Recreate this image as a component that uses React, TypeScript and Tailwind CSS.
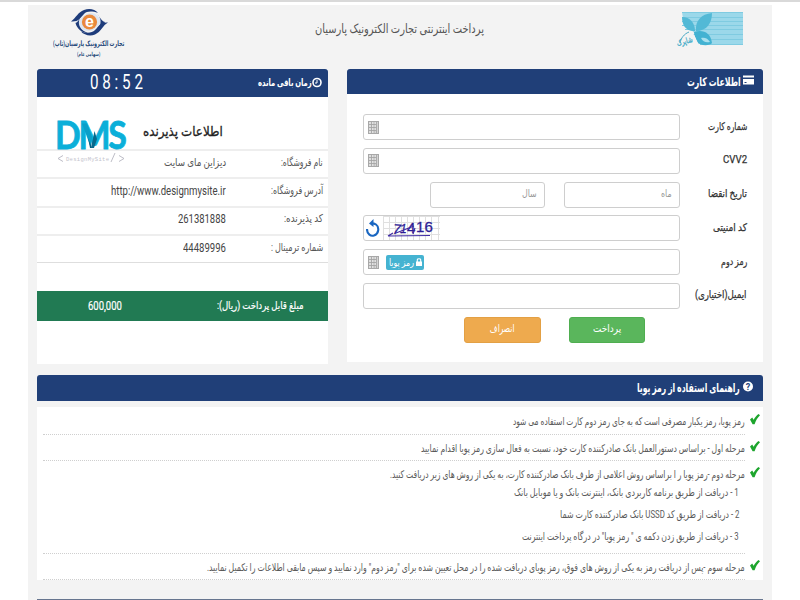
import React, { useLayoutEffect, useRef, useState } from "react";

type FitProps = { w: number; children: React.ReactNode; className?: string; ltr?: boolean };

// Single line of text condensed or widened to a given width.
function Fit({ w, children, className = "", ltr = false }: FitProps) {
  const ref = useRef<HTMLSpanElement>(null);
  const [scale, setScale] = useState(1);
  useLayoutEffect(() => {
    if (ref.current) setScale(w / ref.current.offsetWidth);
  }, [w]);
  return (
    <span className={"flex shrink-0 justify-start " + className} style={{ width: w }} dir={ltr ? "ltr" : "rtl"}>
      <span
        ref={ref}
        className={"inline-block shrink-0 whitespace-nowrap " + (ltr ? "origin-left" : "origin-right")}
        style={{ transform: `scaleX(${scale})` }}
      >
        {children}
      </span>
    </span>
  );
}

function Keypad() {
  return (
    <svg width="11" height="13" viewBox="0 0 11 13" className="shrink-0">
      <rect x="0.5" y="0.5" width="10" height="12" fill="#d4d4d4" stroke="#a8a8a8" />
      <path d="M1 3.500H8M1 6.500H8M1 9.500H8M3.500 1V12M6 1V12M8.500 1V12" stroke="#a2a2a2" strokeWidth="0.8" />
      <path d="M1.300 2H2.800M4 2H5.500M6.500 2H7.800M1.300 5H2.800M4 5H5.500M6.500 5H7.800M1.300 8H2.800M4 8H5.500M6.500 8H7.800M1.300 11H2.800M4 11H5.500" stroke="#f0f0f0" />
    </svg>
  );
}

function EyeLogo() {
  return (
    <svg width="37" height="27" viewBox="0 0 37 27">
      <path d="M0 12.5C5 9 7 3 13 1C18-1 24 0 27 4C21 2 16 2 13 5C9 9 8 13 0 12.5Z" fill="#1e3c7b" />
      <path d="M37 13.5C32 16 30 23 24 25.500C19 27.500 13 26 10 22.500C16 24.500 21 24 24 21C28 17 29 13 37 13.500Z" fill="#1e3c7b" />
      <path d="M4 13C10 12 12 4 20 4C26 4 28 9 32 13C27 14 25 22 18 22C11 22 8 17 4 13Z" fill="#dce5f1" />
      <path d="M13 4C4 12 8 21 17 24C11 24 6 20 4.500 14C8 13 9 7 13 4ZM24.500 3C34 12 29 20 20 24.500C27 24 31 19 34 13C30 12 28 6 24.500 3Z" fill="#1e3c7b" />
      <circle cx="18.500" cy="13" r="7.600" fill="#e9893c" />
      <text x="18.500" y="18" textAnchor="middle" fontSize="16" fontWeight="700" fontFamily="Liberation Sans" fill="#fff">e</text>
    </svg>
  );
}

function ShaparakLogo() {
  return (
    <svg width="67" height="39" viewBox="0 0 67 39" className="overflow-visible">
      <path d="M6 0H67V33H29L22 24L15 18L8 14Z" fill="#9bd8ea" />
      <path d="M6 .5H67M6 5.500H67M6 9.500H67M6 13.500H67M9 17.500H67M16 22.500H67M20 27.500H67M24 32.500H67" stroke="#7fcbe1" strokeWidth="1" />
      <path d="M6 5C14 5 19 11 19 19C11 20 6 14 6 5Z" fill="#52b9d6" />
      <path d="M20 19C19 9 25 2 36 1C36 11 31 19 20 19Z" fill="#52b9d6" />
      <path d="M18 20C26 17 35 20 36 31C34 34 24 34 21 30C20 26 18 24 18 20Z" fill="#43b2d2" />
      <path d="M25 26C28 25 32 26 34 30C30 31 27 30 25 26Z" fill="#a9e0ee" />
      <path d="M10 19L16 19L22 31L21 33L5 33L4 26Z" fill="#f3f3f3" />
      <path d="M13 20C8 22 5 26 4 31" stroke="#48a9c5" strokeWidth="1" fill="none" />
      <text x="9" y="32" textAnchor="middle" fontSize="8" fontFamily="DejaVu Sans" fill="#3eabc9" stroke="#3eabc9" strokeWidth="0.3" transform="rotate(-15 9 31) translate(9 32) scale(.7 1) translate(-9 -32)">شاپرک</text>
    </svg>
  );
}

function DmsLogo() {
  return (
    <svg width="69" height="46" viewBox="0 0 69 46" className="overflow-visible">
      <text transform="translate(-2 30) scale(.88 1)" fontFamily="Lato" fontWeight="700" fontSize="38.500" letterSpacing="-2.600" fill="#0bafd9" stroke="#0bafd9" strokeWidth="0.8">DMS</text>
      <path d="M25 4.500L30 4.500L35 18L34 29Z" fill="#0a9fc8" />
      <path d="M31 19L35 29L33 29Z" fill="#075f80" />
      <path d="M34 29L37.500 12L40 20L37 29Z" fill="#08698c" />
      <path d="M6 36.500L1 39.500L6 42.500M62 36.500L67 39.500L62 42.500M58 34L54 43" stroke="#b5b5c0" strokeWidth="0.9" fill="none" />
      <text x="9" y="41.500" fontSize="5.500" fontFamily="Liberation Mono" textLength="43" fill="#c3c3cc">DesignMySite</text>
    </svg>
  );
}

function Check() {
  return (
    <svg width="10" height="11" viewBox="0 0 10 11" className="shrink-0">
      <path d="M0 5.500L2.200 3.600L3.600 5.800C5 3.200 6.700 1.300 8.600 0L10 1.300C7.500 3.700 5.700 6.700 4.600 10.300H2.600Z" fill="#1da52d" />
    </svg>
  );
}

function Captcha() {
  return (
    <svg width="57" height="24" viewBox="0 0 57 24" className="shrink-0">
      <path d="M0 .5H57M0 6.500H57M0 12.500H57M0 18.500H57M.5 0V25M6.500 0V25M12.500 0V25M18.500 0V25M24.500 0V25M30.500 0V25M36.500 0V25M42.500 0V25M48.500 0V25M55.500 0V25" stroke="#e0e0e0" />
      <g fontFamily="Liberation Sans" fill="#2c1c94" stroke="#2c1c94" strokeWidth="0.3" fontSize="15">
        <text x="10" y="18" fontStyle="italic" fontSize="14" transform="rotate(5 14 13)">7</text>
        <text x="17" y="17" fontStyle="italic" fontSize="12">1</text>
        <text x="24" y="17">4</text>
        <text x="33" y="16">1</text>
        <text x="41.500" y="15.500">6</text>
      </g>
      <path d="M5 20L47 19.500M5 20L10 17M13 17L31 10M30 18L32 12" stroke="#3f2ba3" strokeWidth="1.200" fill="none" />
    </svg>
  );
}

function Field({ label, lw, children }: { label: string; lw: number; children?: React.ReactNode }) {
  return (
    <div className="flex h-[26px] items-center justify-between">
      {children}
      <Fit w={lw} className="pb-[1px] text-[10.500px] leading-[20px] text-[#333] [-webkit-text-stroke:0.25px_#333]">{label}</Fit>
    </div>
  );
}

const box = "flex h-[26px] items-center rounded-[3px] border border-[#cecece] bg-white ";

function Row({ label, lw, value, vw, ltr }: { label: string; lw: number; value: string; vw: number; ltr?: boolean }) {
  return (
    <div className="flex h-[28.300px] items-center justify-end border-t-2 border-[#eeeeee] pb-[3px] pr-[5px] text-[11px] leading-[20px] text-[#555]">
      <Fit w={vw} ltr={ltr} className={ltr ? "text-[12px] text-[#444]" : ""}>{value}</Fit>
      <div className="flex w-[97px] justify-end"><Fit w={lw}>{label}</Fit></div>
    </div>
  );
}

function Step({ text, w, children, h }: { text: string; w: number; children?: React.ReactNode; h: string }) {
  return (
    <li className={"flex items-start justify-end gap-[5px] " + h}>
      <div className="flex h-full flex-1 flex-col items-end border-b border-dotted border-[#cfcfcf] pt-[5px]">
        <Fit w={w} className="leading-[18px]">{text}</Fit>
        {children}
      </div>
      <div className="pt-[6px]"><Check /></div>
    </li>
  );
}

export default function App() {
  return (
    <div className="h-[600px] w-[800px] overflow-hidden bg-white font-[Roboto,'DejaVu_Sans',sans-serif]">
      <div className="h-[5px] border-t-2 border-[#d9d9d9] bg-white" />
      <main className="mx-auto flex h-[595px] w-[744px] flex-col bg-[#f3f3f3] px-[9px]">
        <header className="flex h-[64px] shrink-0 items-start justify-between">
          <div className="flex w-[88px] flex-col items-center pl-[16px] pt-[4px] text-[#294b7b]">
            <EyeLogo />
            <Fit w={71} className="mt-[2px] text-[7.500px] font-bold leading-[12px]">تجارت الکترونیک پارسیان(تاپ)</Fit>
            <Fit w={23} className="text-[5.500px] font-bold leading-[9px]">(سهامی عام)</Fit>
          </div>
          <h1 className="pr-[2px] pt-[14px]">
            <Fit w={169} className="text-[12.500px] leading-[20px] text-[#555]">پرداخت اینترنتی تجارت الکترونیک پارسیان</Fit>
          </h1>
          <div className="w-[88px] pl-[1px] pt-[7px]"><ShaparakLogo /></div>
        </header>

        <div className="flex h-[306px] shrink-0 items-start justify-between">
          <section className="h-[295px] w-[291px] bg-white">
            <div className="flex h-[28px] items-center justify-between rounded-t-[3px] bg-[#203f78] pl-[53px] pr-[6px] text-white">
              <Fit ltr w={53} className="text-[19.500px] leading-[28px]">0 8 : 5 2</Fit>
              <div className="flex items-center">
                <Fit w={54} className="text-[10px] font-bold leading-[20px]">زمان باقی مانده</Fit>
                <svg width="10" height="12" viewBox="0 0 10 12"><circle cx="5" cy="5.500" r="4" fill="none" stroke="#fff" strokeWidth="1.600" /><path d="M5 3V6H3" stroke="#fff" fill="none" /></svg>
              </div>
            </div>
            <div className="relative flex h-[52px] items-center justify-end pr-[105px] pt-[15px]">
              <Fit w={80} className="text-[13.500px] leading-[24px] text-[#222] [-webkit-text-stroke:0.3px_#222]">اطلاعات پذیرنده</Fit>
              <div className="absolute left-[20px] top-[22px]"><DmsLogo /></div>
            </div>
            <Row label="نام فروشگاه:" lw={42} value="دیزاین مای سایت" vw={62} />
            <Row label="آدرس فروشگاه:" lw={52} value="http://www.designmysite.ir" vw={115} ltr />
            <Row label="کد پذیرنده:" lw={39} value="261381888" vw={48} ltr />
            <Row label="شماره ترمینال :" lw={52} value="44489996" vw={43} ltr />
            <div className="h-[29px] border-t border-[#dedede]" />
            <div className="flex h-[30px] items-center justify-between bg-[#217a53] pb-[1px] pl-[51px] pr-[24px] text-white">
              <Fit ltr w={34} className="text-[12px] leading-[20px] [-webkit-text-stroke:0.2px_#fff]">600,000</Fit>
              <Fit w={87} className="text-[11px] leading-[20px] [-webkit-text-stroke:0.2px_#fff]">مبلغ قابل پرداخت (ریال):</Fit>
            </div>
          </section>

          <section className="h-[293px] w-[416px] bg-white">
            <div className="flex h-[25px] items-center justify-end gap-[2px] rounded-t-[3px] bg-[#203f78] pr-[9px] text-white">
              <Fit w={54} className="text-[12px] font-bold leading-[20px]">اطلاعات کارت</Fit>
              <svg width="11" height="10" viewBox="0 0 11 10" className="mb-[3px]"><path d="M0 .5H11V2.500H0ZM0 4H11V9.500H0Z" fill="#fff" /><path d="M1.500 7.500H3.500" stroke="#203f78" /></svg>
            </div>
            <div className="flex flex-col gap-[7.800px] pl-[16px] pr-[16px] pt-[20px]">
              <Field label="شماره کارت" lw={39}><div className={box + "w-[317px] pl-[4px]"}><Keypad /></div></Field>
              <Field label="CVV2" lw={24}><div className={box + "w-[317px] pl-[4px]"}><Keypad /></div></Field>
              <Field label="تاریخ انقضا" lw={39}>
                <div className="flex w-[317px] justify-end gap-[19px] text-[10px] text-[#999]">
                  <div className={box + "w-[115px] justify-end pb-[2px] pr-[7px]"}><Fit w={15}>سال</Fit></div>
                  <div className={box + "w-[116px] justify-end pb-[2px] pr-[7px]"}><Fit w={11}>ماه</Fit></div>
                </div>
              </Field>
              <Field label="کد امنیتی" lw={34}>
                <div className={box + "w-[317px] gap-[3px] pl-[2px]"}>
                  <svg width="14" height="19" viewBox="0 0 14 19"><path d="M1 10C1 15.500 5 17.500 8 16.500C13 15 13.500 8 10 5.500C8.500 4.400 7 4.400 5 4.400" fill="none" stroke="#1966c1" strokeWidth="2.100" /><path d="M3 4.500L7.500 0V8Z" fill="#1966c1" /></svg>
                  <Captcha />
                </div>
              </Field>
              <Field label="رمز دوم" lw={26}>
                <div className={box + "w-[317px] gap-[7px] pl-[4px]"}>
                  <Keypad />
                  <div className="flex h-[15px] w-[38px] items-center justify-center gap-[2px] rounded-[2px] bg-[#45b3d1] text-white">
                    <Fit w={25} className="text-[10px] leading-[15px]">رمز پویا</Fit>
                    <svg width="6" height="8" viewBox="0 0 6 8"><path d="M0 3.500H6V8H0Z" fill="#fff" /><path d="M1.300 4V2C1.300 .3 4.700 .3 4.700 2V4" fill="none" stroke="#fff" strokeWidth="1.100" /></svg>
                  </div>
                </div>
              </Field>
              <Field label="ایمیل(اختیاری)" lw={52}><div className={box + "w-[317px]"} /></Field>
              <div className="flex gap-[28px] pl-[101px] text-[10.500px] leading-[20px] text-white">
                <button className="flex h-[26px] w-[77px] items-center justify-center rounded-[3px] border border-[#e3a044] bg-[#eeaa4e] pb-[2px]"><Fit w={25}>انصراف</Fit></button>
                <button className="flex h-[26px] w-[76px] items-center justify-center rounded-[3px] border border-[#4fae50] bg-[#5ab65c] pb-[1px]"><Fit w={28}>پرداخت</Fit></button>
              </div>
            </div>
          </section>
        </div>

        <div className="flex h-[26px] shrink-0 items-center justify-end gap-[3px] rounded-t-[3px] bg-[#203f78] pr-[10px] text-white">
          <Fit w={103} className="text-[12px] font-bold leading-[20px]">راهنمای استفاده از رمز پویا</Fit>
          <svg width="10" height="12" viewBox="0 0 10 12" className="mb-[2px]"><circle cx="5" cy="5.500" r="5" fill="#fff" /><text x="5" y="9" textAnchor="middle" fontSize="9" fontWeight="700" fontFamily="Roboto" fill="#203f78">?</text></svg>
        </div>
        <ul className="mt-[6px] h-[173px] shrink-0 bg-white pl-[6px] pr-[3px] pt-[1px] text-[10.500px] text-[#5a5a5a]">
          <Step h="h-[26.500px]" w={232} text="رمز پویا، رمز یکبار مصرفی است که به جای رمز دوم کارت استفاده می شود" />
          <Step h="h-[26px]" w={324} text="مرحله اول - براساس دستورالعمل بانک صادرکننده کارت خود، نسبت به فعال سازی رمز پویا اقدام نمایید" />
          <Step h="h-[93px]" w={355} text="مرحله دوم -رمز پویا ر ا براساس روش اعلامی از طرف بانک صادرکننده کارت، به یکی از روش های زیر دریافت کنید.">
            <div className="flex flex-col items-end gap-[4px] pr-[6px] leading-[18px]">
              <Fit w={225}>1 - دریافت از طریق برنامه کاربردی بانک، اینترنت بانک و یا موبایل بانک</Fit>
              <Fit w={179}>2 - دریافت از طریق کد USSD بانک صادرکننده کارت شما</Fit>
              <Fit w={217}>3 - دریافت از طریق زدن دکمه ی " رمز پویا" در درگاه پرداخت اینترنت</Fit>
            </div>
          </Step>
          <Step h="h-[26.500px]" w={538} text={'مرحله سوم -پس از دریافت رمز به یکی از روش های فوق، رمز پویای دریافت شده را در محل تعیین شده برای "رمز دوم" وارد نمایید و سپس مابقی اطلاعات را تکمیل نمایید.'} />
        </ul>
        <div className="mt-[19px] h-[1px] shrink-0 bg-[#66758f]" />
      </main>
    </div>
  );
}
